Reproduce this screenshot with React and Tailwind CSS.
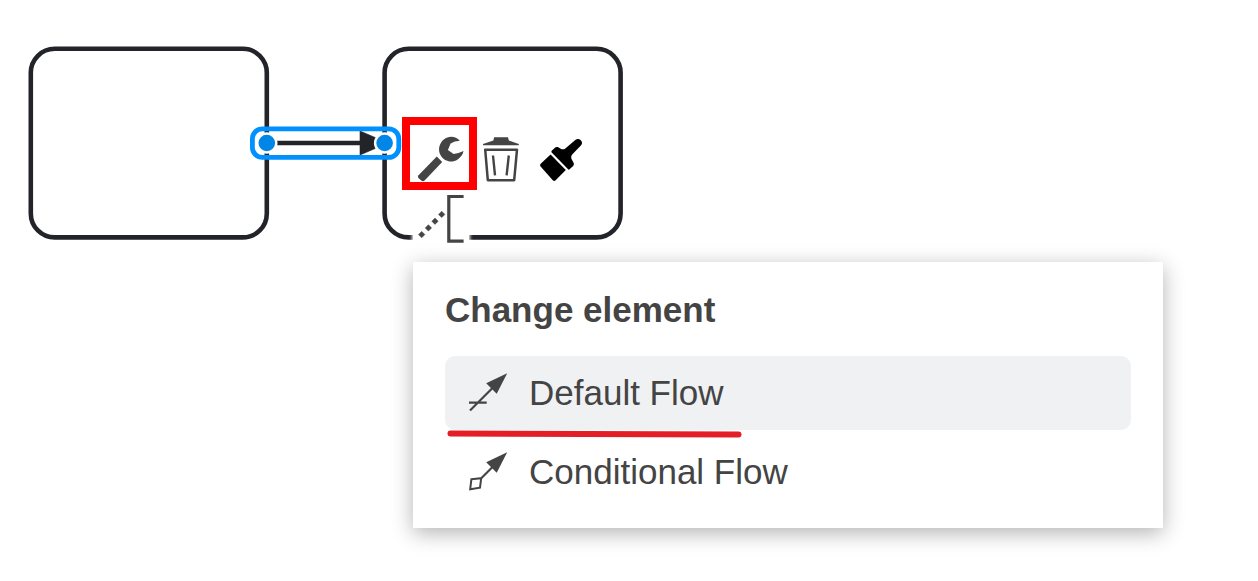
function Diagram() {
  return (
    <svg
      className="absolute left-0 top-0"
      width="660"
      height="260"
      viewBox="0 0 660 260"
      fill="none"
      role="img"
      aria-label="Two tasks joined by a selected sequence flow"
    >
      <g stroke="#22242a" strokeWidth="4.6">
        <rect x="30.8" y="48.8" width="236" height="188.6" rx="24" />
        <rect x="384.6" y="48.8" width="236" height="188.6" rx="24" />
      </g>
      <path d="M267 143H362" stroke="#22242a" strokeWidth="4.6" />
      <path d="M360 131L388 143L360 155Z" fill="#22242a" stroke="#22242a" strokeWidth="0.6" />
      <rect x="252.4" y="128.8" width="146.4" height="28.6" rx="10" stroke="#0091ff" strokeWidth="4.8" />
      <circle cx="266.8" cy="143" r="9.5" fill="#0086e6" stroke="#fff" strokeWidth="2.4" />
      <circle cx="384.6" cy="143" r="9.5" fill="#0086e6" stroke="#fff" strokeWidth="2.4" />
    </svg>
  );
}

function WrenchIcon() {
  return (
    <svg className="size-14" viewBox="413 132 56 56" fill="#444">
      <path d="M459.800 140.800C456 136.200 449 135.200 443.800 139.400C439 143.400 437.700 150 440.600 155.200C444.200 161.600 452 163.200 457.600 159.400C461 157.200 463.200 154 463.500 151.100Q458.500 153.600 453.600 154.100L447.900 149.900L450.600 143.600Q454.500 141 459.800 140.800Z" />
      <path d="M436.800 156.400L442.200 162L424.600 180.400Q423.200 181.700 421.600 180.700L418.400 178.100Q417.300 176.700 418.500 175.300Z" />
    </svg>
  );
}

function TrashIcon() {
  return (
    <svg className="size-14" viewBox="473 132 56 56" fill="none" stroke="#444">
      <path d="M483 145.200V144L493.400 140.400L494.100 137.300H508L508.800 140.400L518.800 144V145.200Z" fill="#444" stroke="none" />
      <path d="M485.200 149.700H517L514.200 180.200H487.800Z" strokeWidth="2.500" strokeLinejoin="round" />
      <path d="M493 155.500L495 175.300M508.800 155.500L506.600 175.300" strokeWidth="2.400" />
    </svg>
  );
}

function BrushIcon() {
  return (
    <svg className="size-14" viewBox="533 132 56 56" fill="#000">
      <path d="M550.600 154.600L565.800 169.900L555.400 180.500Q554.100 181.500 552.800 180.300L540.400 166.300Q539.500 164.900 540.700 163.800Z" />
      <path d="M551.700 152.600Q551 151.700 551.700 150.800L555.200 147.500Q556.400 146.600 557.800 147.100L561.600 149.200Q563.700 149.700 565.300 148.400L575.600 139.700Q578.300 137.900 580.800 140.200Q583.100 142.800 581.100 145.200L572.200 154.600Q570.700 156.400 571.300 158.400L573.800 163.300Q574.100 164.800 573.200 165.900L569.200 169.500Q568.600 169.900 568.100 169.300Z" />
    </svg>
  );
}

function AnnotationIcon() {
  return (
    <svg className="size-14" viewBox="413 192 56 56" fill="none" stroke="#444">
      <path d="M463.600 196.500H448.800V241.100H463.600" strokeWidth="3.200" />
      <path
        d="M421.700 231.400l3.200 3.200l-3.200 3.200l-3.200-3.200zM428.400 224.700l3.200 3.200l-3.200 3.200l-3.200-3.200zM435 218l3.200 3.200l-3.200 3.200l-3.200-3.200zM441.700 211.200l3.200 3.200l-3.200 3.200l-3.200-3.200z"
        fill="#444"
        strokeWidth="0.500"
      />
    </svg>
  );
}

function DefaultFlowIcon() {
  return (
    <svg className="size-12" viewBox="464 369 48 48" fill="none" stroke="#444" strokeWidth="2.200">
      <path d="M470 410.500L493 387.500M469 402.700H486.700" />
      <path d="M507.200 373.200L486.200 383.200L496.700 393.800Z" fill="#444" stroke="none" />
    </svg>
  );
}

function ConditionalFlowIcon() {
  return (
    <svg className="size-12" viewBox="464 448 48 48" fill="none" stroke="#444" strokeWidth="2.200">
      <path d="M481.500 478L493 466.500" />
      <path d="M471.400 479.200L481.200 478.200L480 487.700L470.200 489.200Z" strokeWidth="2" />
      <path d="M507.200 452.200L486.200 462.200L496.700 472.800Z" fill="#444" stroke="none" />
    </svg>
  );
}

function PadButton({ label, children }) {
  return (
    <button type="button" aria-label={label} className="size-14 bg-white shadow-[0_0_3px_1px_#fff]">
      {children}
    </button>
  );
}

function MenuItem({ label, icon, active }) {
  return (
    <li>
      <button
        type="button"
        className={`flex h-[74px] w-full items-center gap-[17px] rounded-[10px] pl-[19px] text-left ${active ? "bg-[#f0f1f3]" : "bg-white"}`}
      >
        {icon}
        <span>{label}</span>
      </button>
    </li>
  );
}

export default function App() {
  return (
    <main className="relative min-h-screen overflow-hidden bg-white font-['Liberation_Sans',Arial,sans-serif] text-[#444]">
      <Diagram />

      <div className="absolute left-[413px] top-[132px] grid grid-cols-3 gap-1">
        <PadButton label="Change element"><WrenchIcon /></PadButton>
        <PadButton label="Delete"><TrashIcon /></PadButton>
        <PadButton label="Set color"><BrushIcon /></PadButton>
        <PadButton label="Add text annotation"><AnnotationIcon /></PadButton>
      </div>
      <div className="pointer-events-none absolute left-[402px] top-[117px] h-[73px] w-[75px] border-8 border-[#ff0000]" />

      <section className="absolute left-[413px] top-[262px] w-[750px] bg-white px-8 pb-[19px] pt-7 text-[35px] leading-10 shadow-[0_5px_20px_rgba(0,0,0,0.3)]">
        <h1 className="font-bold">Change element</h1>
        <ul className="mt-[26px] flex flex-col gap-[5px]">
          <MenuItem label="Default Flow" icon={<DefaultFlowIcon />} active />
          <MenuItem label="Conditional Flow" icon={<ConditionalFlowIcon />} />
        </ul>
        <svg className="pointer-events-none absolute left-8 top-[166px]" width="300" height="12" viewBox="0 0 300 12">
          <path d="M5.500 5.500L293.500 6.500" stroke="#e31e26" strokeWidth="6" strokeLinecap="round" />
        </svg>
      </section>
    </main>
  );
}
